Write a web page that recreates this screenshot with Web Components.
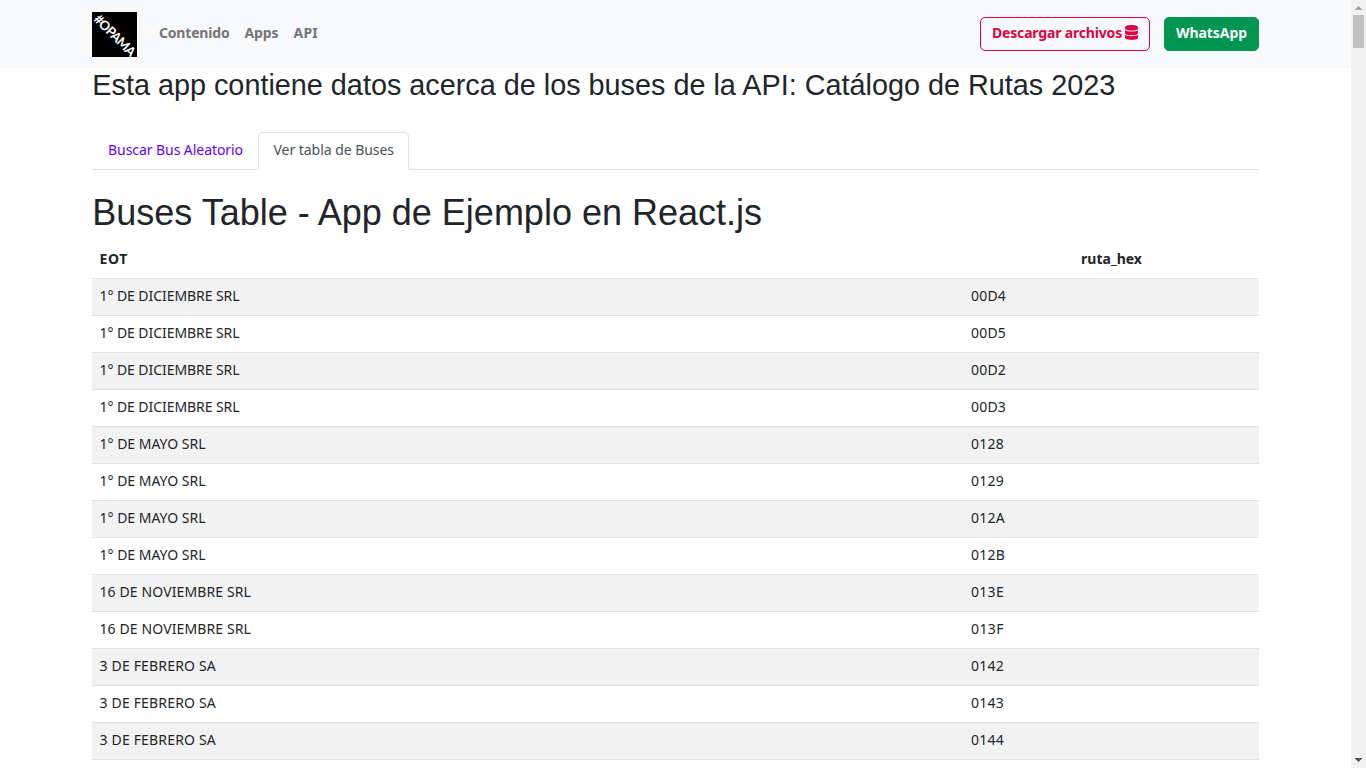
<!DOCTYPE html>
<html lang="es">
<head>
<meta charset="utf-8">
<title>Buses Table</title>
<style>
html,body{margin:0;height:100%;overflow:hidden;background:#fff}
body{font:14px/22px "Noto Sans",sans-serif;color:#212529}
</style>
</head>
<body>
<bus-page></bus-page>
<script>
const define = (name, html, setup) => customElements.define(name, class extends HTMLElement {
  constructor() {
    super();
    this.attachShadow({mode: 'open'});
  }
  connectedCallback() {
    this.shadowRoot.innerHTML = html;
    if (setup) setup(this, this.shadowRoot);
  }
});

// Tracks its text so that the line takes the width given in the attribute "w".
define('fit-text', `<style>:host{display:inline-block;white-space:nowrap}</style><slot></slot>`, el => {
  const w = +el.getAttribute('w');
  el.style.letterSpacing = '0px';
  const n = [...el.textContent].length;
  const natural = el.getBoundingClientRect().width;
  el.style.letterSpacing = (w - natural) / n + 'px';
});

define('brand-logo', `<style>:host{display:block;width:45px;height:45px}svg{display:block;overflow:visible}</style>
<svg width="45" height="45" viewBox="0 0 45 45"><rect width="45" height="45" fill="#000"/>
<text transform="translate(0.9 8) rotate(45)" font-family="Lato,sans-serif" font-weight="700" font-size="13" fill="#fff" textLength="53" lengthAdjust="spacing">#OPAMA</text></svg>`);

define('db-icon', `<style>:host{display:block;width:13px;height:15px;margin-top:-1px}svg{display:block}</style>
<svg width="13" height="15" viewBox="0 0 448 512" preserveAspectRatio="none"><path fill="currentColor" d="M448 73v46c0 40-100 73-224 73S0 159 0 119V73C0 33 100 0 224 0s224 33 224 73zm0 103v103c0 40-100 73-224 73S0 319 0 279V176c48 33 136 49 224 49s176-16 224-49zm0 160v103c0 40-100 73-224 73S0 479 0 439V336c48 33 136 49 224 49s176-16 224-49z"/></svg>`);

define('nav-button', `<style>
:host{display:flex;align-items:center;box-sizing:border-box;height:34px;padding:0 11px 2px;gap:3px;border:1px solid #dc0441;border-radius:5px;color:#dc0441;font-weight:700}
:host([solid]){background:#009550;border-color:#009550;color:#fff}
</style><slot></slot>`);

define('nav-bar', `<style>
:host{display:flex;box-sizing:border-box;height:68px;padding:0 92px;background:#f8f9fb;align-items:center;font-weight:700;color:#747577}
nav{display:flex;gap:15px;margin-left:22px;flex:1;padding-bottom:2px}
div{display:flex;gap:14px}
brand-logo{margin-top:1px}
</style>
<brand-logo></brand-logo>
<nav><fit-text w="70.5">Contenido</fit-text><fit-text w="34">Apps</fit-text><fit-text w="24.5">API</fit-text></nav>
<div><nav-button style="width:170px"><fit-text w="130">Descargar archivos</fit-text><db-icon></db-icon></nav-button>
<nav-button solid style="width:95px"><fit-text w="71">WhatsApp</fit-text></nav-button></div>`);

define('tab-item', `<style>
:host{display:block;box-sizing:border-box;height:38px;width:166px;padding:6px 0 6px 15px;border:1px solid transparent;border-radius:5px 5px 0 0;margin-bottom:-1px;color:#6200ff}
:host([active]){width:151px;padding-left:14.5px;border-color:#dee2e6 #dee2e6 #fff;background:#fff;color:#495057}
</style><slot></slot>`);

define('tab-bar', `<style>:host{display:flex;border-bottom:1px solid #dee2e6;height:37px}</style><slot></slot>`);

define('bus-row', `<style>
:host{display:grid;grid-template-columns:871px 1fr;box-sizing:border-box;height:37px;border-bottom:1px solid #dee2e6;line-height:34px}
:host([odd]){background:#f2f2f2}
:host([head]){font-weight:700}
span{padding-left:7.5px}
span+span{padding-left:8px}
:host([head]) span+span{padding:0 0 0 1px;text-align:center}
</style><span><slot name="eot"></slot></span><span><slot name="hex"></slot></span>`);

const data = [['1° DE DICIEMBRE SRL', 140, ['00D4', '00D5', '00D2', '00D3']],
  ['1° DE MAYO SRL', 106, ['0128', '0129', '012A', '012B']],
  ['16 DE NOVIEMBRE SRL', 151.5, ['013E', '013F']],
  ['3 DE FEBRERO SA', 116.5, ['0142', '0143', '0144']]];
const hexWidth = {'00D4': 35, '00D5': 35, '00D2': 35, '00D3': 35, '012A': 34, '012B': 34};
const row = (flags, a, aw, b, bw) =>
  `<bus-row ${flags}><fit-text slot="eot" w="${aw}">${a}</fit-text><fit-text slot="hex" w="${bw}">${b}</fit-text></bus-row>`;

define('bus-table', `<style>:host{display:block}</style><section></section>`, (el, root) => {
  let i = 0;
  root.querySelector('section').innerHTML = row('head', 'EOT', 28.5, 'ruta_hex', 61) +
    data.flatMap(([name, w, codes]) => codes.map(c => row(i++ % 2 ? '' : 'odd', name, w, c, hexWidth[c] || 33))).join('');
});

define('scroll-bar', `<style>
:host{display:flex;flex-direction:column;justify-content:space-between;width:15px;background:#f1f1f1}
i{display:block;width:11px;height:33px;margin:5px 0 0 2px;background:#c1c1c1}
svg{display:block}
</style><div><svg width="15" height="10"><path d="M7 6h1v1h1v1h1v1h1v1H4V9h1V8h1V7h1z" fill="#a3a3a3"/></svg><i></i></div>
<svg width="15" height="12"><path d="M4 2h7v1h-1v1H9v1H8v1H7V5H6V4H5V3H4z" fill="#505050"/></svg>`);

define('bus-page', `<style>
:host{display:grid;grid-template-columns:1fr 15px;width:1366px;height:768px;overflow:hidden}
main{padding:0 92px}
h1,h2{margin:0;font-family:"Liberation Sans",sans-serif;font-weight:400;padding-left:.3px}
h2{font-size:28.8px;line-height:34px;height:64px}
h1{font-size:36px;line-height:43px;height:51px;margin-top:21px}
</style>
<div><nav-bar></nav-bar><main>
<h2><fit-text w="1023">Esta app contiene datos acerca de los buses de la API: Catálogo de Rutas 2023</fit-text></h2>
<tab-bar><tab-item><fit-text w="135">Buscar Bus Aleatorio</fit-text></tab-item><tab-item active><fit-text w="120.5">Ver tabla de Buses</fit-text></tab-item></tab-bar>
<h1><fit-text w="669.7">Buses Table - App de Ejemplo en React.js</fit-text></h1>
<bus-table></bus-table></main></div><scroll-bar></scroll-bar>`);
</script>
</body>
</html>
